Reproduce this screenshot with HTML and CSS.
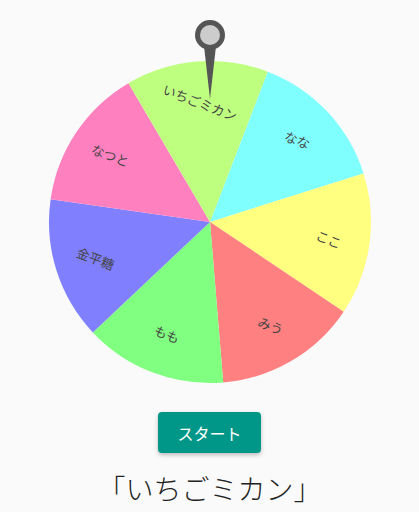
FILE: index.html
```html
<!DOCTYPE html>
<html lang="ja">
<head>
  <meta charset="UTF-8">
  <title>ルーレット</title>
  <link rel="stylesheet" href="styles.css">
</head>
<body>
  <div class="app">
    <svg id="wheel" class="wheel" width="340" height="382" viewBox="0 0 340 382">
      <g id="slices"></g>
      <g class="pointer">
        <polygon points="164,26 176,26 170,79" fill="#555"></polygon>
        <circle cx="170" cy="15" r="15" fill="#555"></circle>
        <circle cx="170" cy="15" r="10" fill="#ccc"></circle>
      </g>
    </svg>
    <button class="start" onclick="spin()">スタート</button>
    <div id="result" class="result">「いちごミカン」</div>
  </div>

  <script>
    const items = [
      { name: 'なな', color: '#80ffff' },
      { name: 'ここ', color: '#ffff80' },
      { name: 'みう', color: '#ff8080' },
      { name: 'もも', color: '#80ff80' },
      { name: '金平糖', color: '#8080ff' },
      { name: 'なつと', color: '#ff80bf' },
      { name: 'いちごミカン', color: '#bfff80' }
    ];
    const cx = 170, cy = 202, r = 161;
    let offset = 21;

    function point(deg, rad) {
      const a = deg * Math.PI / 180;
      return [cx + rad * Math.sin(a), cy - rad * Math.cos(a)];
    }

    function draw() {
      const g = document.getElementById('slices');
      const step = 360 / items.length;
      let html = '';
      items.forEach(function (item, i) {
        const a1 = offset + i * step;
        const a2 = a1 + step;
        const p1 = point(a1, r);
        const p2 = point(a2, r);
        html += '<path d="M' + cx + ',' + cy + ' L' + p1[0].toFixed(2) + ',' + p1[1].toFixed(2) +
          ' A' + r + ',' + r + ' 0 0 1 ' + p2[0].toFixed(2) + ',' + p2[1].toFixed(2) + ' Z" fill="' + item.color + '"></path>';
      });
      items.forEach(function (item, i) {
        const t = point(offset + (i + 0.5) * step, 120);
        html += '<text class="label" transform="translate(' + t[0].toFixed(2) + ',' + t[1].toFixed(2) +
          ') rotate(' + offset + ')">' + item.name + '</text>';
      });
      g.innerHTML = html;
    }

    function spin() {
      offset = Math.random() * 360;
      draw();
      const step = 360 / items.length;
      const idx = Math.floor((((360 - offset) % 360) + 360) % 360 / step);
      document.getElementById('result').textContent = '「' + items[idx].name + '」';
    }

    draw();
  </script>
</body>
</html>
```

FILE: styles.css
```css
body {
  margin: 0;
  background: #fafafa;
  font-family: "Noto Sans CJK JP", "Noto Sans", sans-serif;
}
.app {
  display: flex;
  flex-direction: column;
  align-items: center;
  padding-top: 20px;
}
.wheel {
  display: block;
}
.label {
  font-family: "Noto Sans CJK JP", sans-serif;
  font-size: 13px;
  fill: #444;
  text-anchor: middle;
  dominant-baseline: central;
}
.start {
  margin-top: 10px;
  height: 41px;
  padding: 0 19px;
  border: none;
  border-radius: 4px;
  background: #009688;
  color: #fff;
  font-family: "Noto Sans CJK JP", sans-serif;
  font-size: 16px;
  box-shadow: 0 2px 4px rgba(0,0,0,0.25);
  cursor: pointer;
}
.result {
  margin-top: 19px;
  font-size: 28px;
  font-weight: 300;
  line-height: 32px;
  color: #222;
}
```
